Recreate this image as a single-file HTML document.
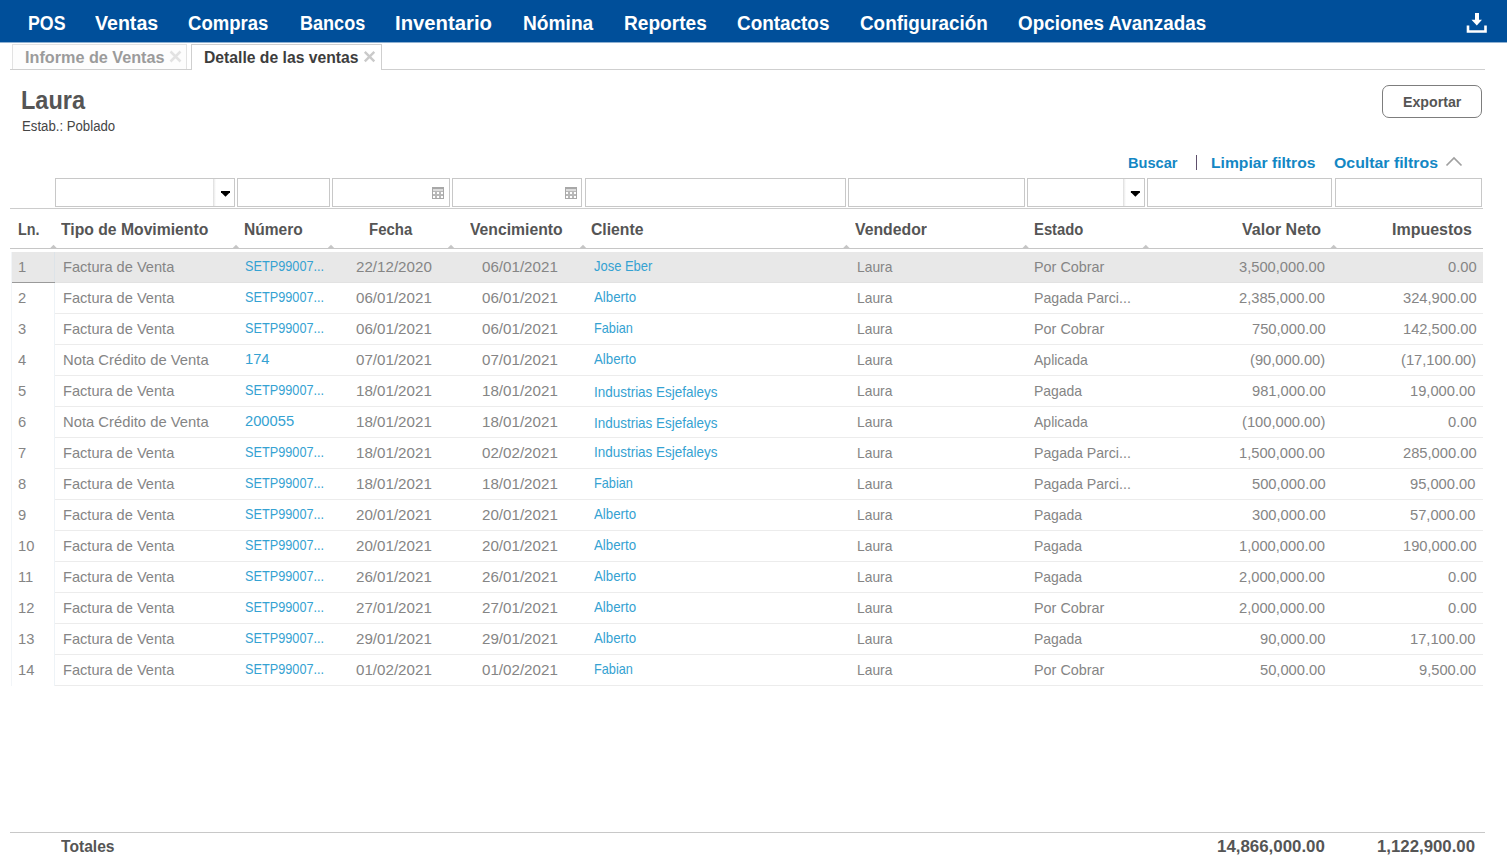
<!DOCTYPE html><html><head><meta charset="utf-8"><style>
html,body{margin:0;padding:0;background:#fff;width:1507px;height:862px;overflow:hidden;position:relative;font-family:"Liberation Sans",sans-serif}
.t{position:absolute;white-space:nowrap;line-height:normal;transform-origin:0 0}
.b{position:absolute;box-sizing:border-box}
</style></head><body>
<div class="b" style="left:0;top:0;width:1507px;height:42px;background:#004f9a"></div>
<div class="b" style="left:0;top:42px;width:1507px;height:1px;background:#8fb1d2"></div>
<svg style="position:absolute;left:1460px;top:8px" width="34" height="30" viewBox="1460 8 34 30"><rect x="1475" y="13" width="4" height="8" fill="#fff"/><path d="M1471.5 19.8 L1482 19.8 L1476.8 25.5 Z" fill="#fff"/><path d="M1468 25.5 V31.5 H1485.5 V25.5" fill="none" stroke="#fff" stroke-width="2.6"/></svg>
<div class="b" style="left:12px;top:44px;width:175px;height:26px;border:1px solid #e2e2e2;border-bottom:none;background:#fdfdfd"></div>
<div class="b" style="left:10px;top:69px;width:1475px;height:1px;background:#cfcfcf"></div>
<div class="b" style="left:191px;top:44px;width:191px;height:26px;border:1px solid #cfcfcf;border-bottom:none;background:#fff"></div>
<svg style="position:absolute;left:165px;top:46px" width="22" height="22" viewBox="165 46 22 22"><path d="M170.5 51.5 L180.5 61.5 M180.5 51.5 L170.5 61.5" stroke="#e2e2e2" stroke-width="2.5"/></svg>
<svg style="position:absolute;left:360px;top:46px" width="22" height="22" viewBox="360 46 22 22"><path d="M364.8 51.8 L374.3 61.3 M374.3 51.8 L364.8 61.3" stroke="#cacaca" stroke-width="2.4"/></svg>
<div class="b" style="left:1382px;top:85px;width:100px;height:33px;border:1.5px solid #7d7d7d;border-radius:7px;background:#fff"></div>
<div class="b" style="left:1196px;top:155px;width:1px;height:15px;background:#5e4f6c"></div>
<svg style="position:absolute;left:1440px;top:150px" width="30" height="22" viewBox="1440 150 30 22"><path d="M1446.5 165.5 L1454 158 L1461.5 165.5" fill="none" stroke="#a0a0a0" stroke-width="1.7"/></svg>
<div class="b" style="left:55px;top:178px;width:180px;height:29px;border:1px solid #c8c8c8;background:#fff"></div>
<div class="b" style="left:237px;top:178px;width:93px;height:29px;border:1px solid #c8c8c8;background:#fff"></div>
<div class="b" style="left:332px;top:178px;width:118px;height:29px;border:1px solid #c8c8c8;background:#fff"></div>
<div class="b" style="left:452px;top:178px;width:130px;height:29px;border:1px solid #c8c8c8;background:#fff"></div>
<div class="b" style="left:585px;top:178px;width:261px;height:29px;border:1px solid #c8c8c8;background:#fff"></div>
<div class="b" style="left:848px;top:178px;width:177px;height:29px;border:1px solid #c8c8c8;background:#fff"></div>
<div class="b" style="left:1027px;top:178px;width:118px;height:29px;border:1px solid #c8c8c8;background:#fff"></div>
<div class="b" style="left:1147px;top:178px;width:185px;height:29px;border:1px solid #c8c8c8;background:#fff"></div>
<div class="b" style="left:1335px;top:178px;width:147px;height:29px;border:1px solid #c8c8c8;background:#fff"></div>
<div class="b" style="left:213px;top:179px;width:3px;height:27px;background:linear-gradient(to right,#dcdcdc,#f4f4f4 60%,#fff)"></div>
<svg style="position:absolute;left:219px;top:188px" width="14" height="12" viewBox="219 188 14 12"><path d="M221.0 191 H230.0 V192.2 L225.5 196.8 L221.0 192.2 Z" fill="#000"/></svg>
<div class="b" style="left:1123px;top:179px;width:3px;height:27px;background:linear-gradient(to right,#dcdcdc,#f4f4f4 60%,#fff)"></div>
<svg style="position:absolute;left:1129px;top:188px" width="14" height="12" viewBox="1129 188 14 12"><path d="M1130.9 191 H1139.9 V192.2 L1135.4 196.8 L1130.9 192.2 Z" fill="#000"/></svg>
<svg style="position:absolute;left:432px;top:187px" width="12" height="12" viewBox="0 0 12 12" shape-rendering="crispEdges"><rect x="0" y="0" width="12" height="12" fill="#a8a8a8"/><rect x="1" y="2" width="10" height="2" fill="#dcdcdc"/><rect x="1" y="4" width="10" height="7" fill="#b8b8b8"/><rect x="1" y="5" width="2" height="2" fill="#fff"/><rect x="5" y="5" width="2" height="2" fill="#fff"/><rect x="9" y="5" width="2" height="2" fill="#fff"/><rect x="1" y="9" width="2" height="2" fill="#fff"/><rect x="5" y="9" width="2" height="2" fill="#fff"/><rect x="9" y="9" width="2" height="2" fill="#fff"/></svg>
<svg style="position:absolute;left:565px;top:187px" width="12" height="12" viewBox="0 0 12 12" shape-rendering="crispEdges"><rect x="0" y="0" width="12" height="12" fill="#a8a8a8"/><rect x="1" y="2" width="10" height="2" fill="#dcdcdc"/><rect x="1" y="4" width="10" height="7" fill="#b8b8b8"/><rect x="1" y="5" width="2" height="2" fill="#fff"/><rect x="5" y="5" width="2" height="2" fill="#fff"/><rect x="9" y="5" width="2" height="2" fill="#fff"/><rect x="1" y="9" width="2" height="2" fill="#fff"/><rect x="5" y="9" width="2" height="2" fill="#fff"/><rect x="9" y="9" width="2" height="2" fill="#fff"/></svg>
<div class="b" style="left:10px;top:208px;width:1473px;height:1px;background:#cccccc"></div>
<div class="b" style="left:10px;top:248px;width:1473px;height:1px;background:#c6c6c6"></div>
<svg style="position:absolute;left:0;top:240px" width="1507" height="10" viewBox="0 240 1507 10"><path d="M49.8 248.5 L53.5 244.8 L57.2 248.5 Z" fill="#c6c6c6"/><path d="M232.3 248.5 L236.0 244.8 L239.7 248.5 Z" fill="#c6c6c6"/><path d="M327.3 248.5 L331.0 244.8 L334.7 248.5 Z" fill="#c6c6c6"/><path d="M447.3 248.5 L451.0 244.8 L454.7 248.5 Z" fill="#c6c6c6"/><path d="M579.3 248.5 L583.0 244.8 L586.7 248.5 Z" fill="#c6c6c6"/><path d="M842.7 248.5 L846.4 244.8 L850.1 248.5 Z" fill="#c6c6c6"/><path d="M1022.0 248.5 L1025.7 244.8 L1029.4 248.5 Z" fill="#c6c6c6"/><path d="M1142.1 248.5 L1145.8 244.8 L1149.5 248.5 Z" fill="#c6c6c6"/><path d="M1330.0 248.5 L1333.7 244.8 L1337.4 248.5 Z" fill="#c6c6c6"/></svg>
<div class="b" style="left:11px;top:252px;width:1472px;height:30px;background:#e8e8e8"></div>
<div class="b" style="left:11px;top:282px;width:44px;height:1px;background:#9a9a9a"></div>
<div class="b" style="left:55px;top:282px;width:1428px;height:1px;background:#e2e2e2"></div>
<div class="b" style="left:55px;top:313px;width:1428px;height:1px;background:#ececec"></div>
<div class="b" style="left:55px;top:344px;width:1428px;height:1px;background:#ececec"></div>
<div class="b" style="left:55px;top:375px;width:1428px;height:1px;background:#ececec"></div>
<div class="b" style="left:55px;top:406px;width:1428px;height:1px;background:#ececec"></div>
<div class="b" style="left:55px;top:437px;width:1428px;height:1px;background:#ececec"></div>
<div class="b" style="left:55px;top:468px;width:1428px;height:1px;background:#ececec"></div>
<div class="b" style="left:55px;top:499px;width:1428px;height:1px;background:#ececec"></div>
<div class="b" style="left:55px;top:530px;width:1428px;height:1px;background:#ececec"></div>
<div class="b" style="left:55px;top:561px;width:1428px;height:1px;background:#ececec"></div>
<div class="b" style="left:55px;top:592px;width:1428px;height:1px;background:#ececec"></div>
<div class="b" style="left:55px;top:623px;width:1428px;height:1px;background:#ececec"></div>
<div class="b" style="left:55px;top:654px;width:1428px;height:1px;background:#ececec"></div>
<div class="b" style="left:55px;top:685px;width:1428px;height:1px;background:#ececec"></div>
<div class="b" style="left:11px;top:252px;width:1px;height:434px;background:#f2f5f8"></div>
<div class="b" style="left:54px;top:283px;width:1px;height:403px;background:#eef3f7"></div>
<div class="b" style="left:54px;top:252px;width:1px;height:30px;background:#dde3e8"></div>
<div class="b" style="left:10px;top:832px;width:1475px;height:1px;background:#c8c8c8"></div>
<div class="t" id="nav0" style="left:28.00px;top:12.00px;font-size:20px;color:#ffffff;font-weight:bold;transform:scaleX(0.8881);">POS</div>
<div class="t" id="nav1" style="left:95.30px;top:12.00px;font-size:20px;color:#ffffff;font-weight:bold;transform:scaleX(0.9797);">Ventas</div>
<div class="t" id="nav2" style="left:188.00px;top:12.00px;font-size:20px;color:#ffffff;font-weight:bold;transform:scaleX(0.9264);">Compras</div>
<div class="t" id="nav3" style="left:300.00px;top:12.00px;font-size:20px;color:#ffffff;font-weight:bold;transform:scaleX(0.9028);">Bancos</div>
<div class="t" id="nav4" style="left:395.40px;top:12.00px;font-size:20px;color:#ffffff;font-weight:bold;transform:scaleX(1.0146);">Inventario</div>
<div class="t" id="nav5" style="left:522.80px;top:12.00px;font-size:20px;color:#ffffff;font-weight:bold;transform:scaleX(0.9581);">Nómina</div>
<div class="t" id="nav6" style="left:624.20px;top:12.00px;font-size:20px;color:#ffffff;font-weight:bold;transform:scaleX(0.9552);">Reportes</div>
<div class="t" id="nav7" style="left:736.70px;top:12.00px;font-size:20px;color:#ffffff;font-weight:bold;transform:scaleX(0.9449);">Contactos</div>
<div class="t" id="nav8" style="left:859.70px;top:12.00px;font-size:20px;color:#ffffff;font-weight:bold;transform:scaleX(0.9426);">Configuración</div>
<div class="t" id="nav9" style="left:1017.70px;top:12.00px;font-size:20px;color:#ffffff;font-weight:bold;transform:scaleX(0.9425);">Opciones Avanzadas</div>
<div class="t" id="tab1" style="left:24.90px;top:49.00px;font-size:16px;color:#9b9b9b;font-weight:bold;transform:scaleX(1.0123);">Informe de Ventas</div>
<div class="t" id="tab2" style="left:204.10px;top:49.00px;font-size:16px;color:#3d3d3d;font-weight:bold;transform:scaleX(0.9816);">Detalle de las ventas</div>
<div class="t" id="laura" style="left:21.10px;top:86.00px;font-size:25px;color:#555555;font-weight:bold;transform:scaleX(0.9406);">Laura</div>
<div class="t" id="estab" style="left:21.80px;top:118.00px;font-size:14px;color:#454545;transform:scaleX(0.9424);">Estab.: Poblado</div>
<div class="t" id="exportar" style="left:1402.80px;top:94.00px;font-size:14px;color:#555555;font-weight:bold;transform:scaleX(1.0138);">Exportar</div>
<div class="t" id="buscar" style="left:1128.00px;top:154.00px;font-size:15px;color:#1387c4;font-weight:bold;transform:scaleX(0.9745);">Buscar</div>
<div class="t" id="limpiar" style="left:1210.60px;top:154.00px;font-size:15px;color:#1387c4;font-weight:bold;transform:scaleX(1.0440);">Limpiar filtros</div>
<div class="t" id="ocultar" style="left:1334.10px;top:154.00px;font-size:15px;color:#1387c4;font-weight:bold;transform:scaleX(1.0571);">Ocultar filtros</div>
<div class="t" id="h0" style="left:17.90px;top:221.00px;font-size:16px;color:#555555;font-weight:bold;transform:scaleX(0.8958);">Ln.</div>
<div class="t" id="h1" style="left:61.30px;top:221.00px;font-size:16px;color:#555555;font-weight:bold;transform:scaleX(0.9820);">Tipo de Movimiento</div>
<div class="t" id="h2" style="left:243.80px;top:221.00px;font-size:16px;color:#555555;font-weight:bold;transform:scaleX(0.9705);">Número</div>
<div class="t" id="h3" style="left:369.40px;top:221.00px;font-size:16px;color:#555555;font-weight:bold;transform:scaleX(0.9348);">Fecha</div>
<div class="t" id="h4" style="left:470.20px;top:221.00px;font-size:16px;color:#555555;font-weight:bold;transform:scaleX(0.9832);">Vencimiento</div>
<div class="t" id="h5" style="left:590.90px;top:221.00px;font-size:16px;color:#555555;font-weight:bold;transform:scaleX(0.9830);">Cliente</div>
<div class="t" id="h6" style="left:854.70px;top:221.00px;font-size:16px;color:#555555;font-weight:bold;transform:scaleX(0.9863);">Vendedor</div>
<div class="t" id="h7" style="left:1033.70px;top:221.00px;font-size:16px;color:#555555;font-weight:bold;transform:scaleX(0.9259);">Estado</div>
<div class="t" id="h8" style="left:1242.00px;top:221.00px;font-size:16px;color:#555555;font-weight:bold;">Valor Neto</div>
<div class="t" id="h9" style="left:1391.70px;top:221.00px;font-size:16px;color:#555555;font-weight:bold;transform:scaleX(0.9987);">Impuestos</div>
<div class="t" id="r0_ln" style="left:18.30px;top:258.00px;font-size:15px;color:#858585;transform:scaleX(0.9800);">1</div>
<div class="t" id="r0_tipo" style="left:62.60px;top:258.00px;font-size:15px;color:#858585;transform:scaleX(0.9739);">Factura de Venta</div>
<div class="t" id="r0_num" style="left:245.40px;top:257.00px;font-size:15px;color:#35a2d2;transform:scaleX(0.8470);">SETP99007...</div>
<div class="t" id="r0_fe" style="left:355.73px;top:258.00px;font-size:15px;color:#858585;transform:scaleX(1.0100);">22/12/2020</div>
<div class="t" id="r0_ve" style="left:481.62px;top:258.00px;font-size:15px;color:#858585;transform:scaleX(1.0100);">06/01/2021</div>
<div class="t" id="r0_cli" style="left:593.50px;top:257.00px;font-size:15px;color:#35a2d2;transform:scaleX(0.8630);">Jose Eber</div>
<div class="t" id="r0_ven" style="left:856.50px;top:258.00px;font-size:15px;color:#858585;transform:scaleX(0.9231);">Laura</div>
<div class="t" id="r0_est" style="left:1034.30px;top:258.00px;font-size:15px;color:#858585;transform:scaleX(0.9590);">Por Cobrar</div>
<div class="t" id="r0_val" style="left:1239.46px;top:258.00px;font-size:15px;color:#858585;transform:scaleX(0.9800);">3,500,000.00</div>
<div class="t" id="r0_imp" style="left:1447.58px;top:258.00px;font-size:15px;color:#858585;transform:scaleX(0.9800);">0.00</div>
<div class="t" id="r1_ln" style="left:18.30px;top:289.00px;font-size:15px;color:#858585;transform:scaleX(0.9800);">2</div>
<div class="t" id="r1_tipo" style="left:62.60px;top:289.00px;font-size:15px;color:#858585;transform:scaleX(0.9739);">Factura de Venta</div>
<div class="t" id="r1_num" style="left:245.40px;top:288.00px;font-size:15px;color:#35a2d2;transform:scaleX(0.8470);">SETP99007...</div>
<div class="t" id="r1_fe" style="left:355.73px;top:289.00px;font-size:15px;color:#858585;transform:scaleX(1.0100);">06/01/2021</div>
<div class="t" id="r1_ve" style="left:481.62px;top:289.00px;font-size:15px;color:#858585;transform:scaleX(1.0100);">06/01/2021</div>
<div class="t" id="r1_cli" style="left:593.50px;top:288.00px;font-size:15px;color:#35a2d2;transform:scaleX(0.8850);">Alberto</div>
<div class="t" id="r1_ven" style="left:856.50px;top:289.00px;font-size:15px;color:#858585;transform:scaleX(0.9231);">Laura</div>
<div class="t" id="r1_est" style="left:1034.30px;top:289.00px;font-size:15px;color:#858585;transform:scaleX(0.9440);">Pagada Parci...</div>
<div class="t" id="r1_val" style="left:1239.46px;top:289.00px;font-size:15px;color:#858585;transform:scaleX(0.9800);">2,385,000.00</div>
<div class="t" id="r1_imp" style="left:1402.50px;top:289.00px;font-size:15px;color:#858585;transform:scaleX(0.9800);">324,900.00</div>
<div class="t" id="r2_ln" style="left:18.30px;top:320.00px;font-size:15px;color:#858585;transform:scaleX(0.9800);">3</div>
<div class="t" id="r2_tipo" style="left:62.60px;top:320.00px;font-size:15px;color:#858585;transform:scaleX(0.9739);">Factura de Venta</div>
<div class="t" id="r2_num" style="left:245.40px;top:319.00px;font-size:15px;color:#35a2d2;transform:scaleX(0.8470);">SETP99007...</div>
<div class="t" id="r2_fe" style="left:355.73px;top:320.00px;font-size:15px;color:#858585;transform:scaleX(1.0100);">06/01/2021</div>
<div class="t" id="r2_ve" style="left:481.62px;top:320.00px;font-size:15px;color:#858585;transform:scaleX(1.0100);">06/01/2021</div>
<div class="t" id="r2_cli" style="left:593.50px;top:319.00px;font-size:15px;color:#35a2d2;transform:scaleX(0.8480);">Fabian</div>
<div class="t" id="r2_ven" style="left:856.50px;top:320.00px;font-size:15px;color:#858585;transform:scaleX(0.9231);">Laura</div>
<div class="t" id="r2_est" style="left:1034.30px;top:320.00px;font-size:15px;color:#858585;transform:scaleX(0.9590);">Por Cobrar</div>
<div class="t" id="r2_val" style="left:1252.20px;top:320.00px;font-size:15px;color:#858585;transform:scaleX(0.9800);">750,000.00</div>
<div class="t" id="r2_imp" style="left:1402.50px;top:320.00px;font-size:15px;color:#858585;transform:scaleX(0.9800);">142,500.00</div>
<div class="t" id="r3_ln" style="left:18.30px;top:351.00px;font-size:15px;color:#858585;transform:scaleX(0.9800);">4</div>
<div class="t" id="r3_tipo" style="left:62.60px;top:351.00px;font-size:15px;color:#858585;transform:scaleX(0.9865);">Nota Crédito de Venta</div>
<div class="t" id="r3_num" style="left:245.40px;top:350.00px;font-size:15px;color:#35a2d2;transform:scaleX(0.9800);">174</div>
<div class="t" id="r3_fe" style="left:355.73px;top:351.00px;font-size:15px;color:#858585;transform:scaleX(1.0100);">07/01/2021</div>
<div class="t" id="r3_ve" style="left:481.62px;top:351.00px;font-size:15px;color:#858585;transform:scaleX(1.0100);">07/01/2021</div>
<div class="t" id="r3_cli" style="left:593.50px;top:350.00px;font-size:15px;color:#35a2d2;transform:scaleX(0.8850);">Alberto</div>
<div class="t" id="r3_ven" style="left:856.50px;top:351.00px;font-size:15px;color:#858585;transform:scaleX(0.9231);">Laura</div>
<div class="t" id="r3_est" style="left:1034.30px;top:351.00px;font-size:15px;color:#858585;transform:scaleX(0.9340);">Aplicada</div>
<div class="t" id="r3_val" style="left:1250.24px;top:351.00px;font-size:15px;color:#858585;transform:scaleX(0.9800);">(90,000.00)</div>
<div class="t" id="r3_imp" style="left:1400.54px;top:351.00px;font-size:15px;color:#858585;transform:scaleX(0.9800);">(17,100.00)</div>
<div class="t" id="r4_ln" style="left:18.30px;top:382.00px;font-size:15px;color:#858585;transform:scaleX(0.9800);">5</div>
<div class="t" id="r4_tipo" style="left:62.60px;top:382.00px;font-size:15px;color:#858585;transform:scaleX(0.9739);">Factura de Venta</div>
<div class="t" id="r4_num" style="left:245.40px;top:381.00px;font-size:15px;color:#35a2d2;transform:scaleX(0.8470);">SETP99007...</div>
<div class="t" id="r4_fe" style="left:355.73px;top:382.00px;font-size:15px;color:#858585;transform:scaleX(1.0100);">18/01/2021</div>
<div class="t" id="r4_ve" style="left:481.62px;top:382.00px;font-size:15px;color:#858585;transform:scaleX(1.0100);">18/01/2021</div>
<div class="t" id="r4_cli" style="left:593.50px;top:383.00px;font-size:15px;color:#35a2d2;transform:scaleX(0.8970);">Industrias Esjefaleys</div>
<div class="t" id="r4_ven" style="left:856.50px;top:382.00px;font-size:15px;color:#858585;transform:scaleX(0.9231);">Laura</div>
<div class="t" id="r4_est" style="left:1034.30px;top:382.00px;font-size:15px;color:#858585;transform:scaleX(0.9300);">Pagada</div>
<div class="t" id="r4_val" style="left:1252.20px;top:382.00px;font-size:15px;color:#858585;transform:scaleX(0.9800);">981,000.00</div>
<div class="t" id="r4_imp" style="left:1410.34px;top:382.00px;font-size:15px;color:#858585;transform:scaleX(0.9800);">19,000.00</div>
<div class="t" id="r5_ln" style="left:18.30px;top:413.00px;font-size:15px;color:#858585;transform:scaleX(0.9800);">6</div>
<div class="t" id="r5_tipo" style="left:62.60px;top:413.00px;font-size:15px;color:#858585;transform:scaleX(0.9865);">Nota Crédito de Venta</div>
<div class="t" id="r5_num" style="left:245.40px;top:412.00px;font-size:15px;color:#35a2d2;transform:scaleX(0.9800);">200055</div>
<div class="t" id="r5_fe" style="left:355.73px;top:413.00px;font-size:15px;color:#858585;transform:scaleX(1.0100);">18/01/2021</div>
<div class="t" id="r5_ve" style="left:481.62px;top:413.00px;font-size:15px;color:#858585;transform:scaleX(1.0100);">18/01/2021</div>
<div class="t" id="r5_cli" style="left:593.50px;top:414.00px;font-size:15px;color:#35a2d2;transform:scaleX(0.8970);">Industrias Esjefaleys</div>
<div class="t" id="r5_ven" style="left:856.50px;top:413.00px;font-size:15px;color:#858585;transform:scaleX(0.9231);">Laura</div>
<div class="t" id="r5_est" style="left:1034.30px;top:413.00px;font-size:15px;color:#858585;transform:scaleX(0.9340);">Aplicada</div>
<div class="t" id="r5_val" style="left:1242.40px;top:413.00px;font-size:15px;color:#858585;transform:scaleX(0.9800);">(100,000.00)</div>
<div class="t" id="r5_imp" style="left:1447.58px;top:413.00px;font-size:15px;color:#858585;transform:scaleX(0.9800);">0.00</div>
<div class="t" id="r6_ln" style="left:18.30px;top:444.00px;font-size:15px;color:#858585;transform:scaleX(0.9800);">7</div>
<div class="t" id="r6_tipo" style="left:62.60px;top:444.00px;font-size:15px;color:#858585;transform:scaleX(0.9739);">Factura de Venta</div>
<div class="t" id="r6_num" style="left:245.40px;top:443.00px;font-size:15px;color:#35a2d2;transform:scaleX(0.8470);">SETP99007...</div>
<div class="t" id="r6_fe" style="left:355.73px;top:444.00px;font-size:15px;color:#858585;transform:scaleX(1.0100);">18/01/2021</div>
<div class="t" id="r6_ve" style="left:481.62px;top:444.00px;font-size:15px;color:#858585;transform:scaleX(1.0100);">02/02/2021</div>
<div class="t" id="r6_cli" style="left:593.50px;top:443.00px;font-size:15px;color:#35a2d2;transform:scaleX(0.8970);">Industrias Esjefaleys</div>
<div class="t" id="r6_ven" style="left:856.50px;top:444.00px;font-size:15px;color:#858585;transform:scaleX(0.9231);">Laura</div>
<div class="t" id="r6_est" style="left:1034.30px;top:444.00px;font-size:15px;color:#858585;transform:scaleX(0.9440);">Pagada Parci...</div>
<div class="t" id="r6_val" style="left:1239.46px;top:444.00px;font-size:15px;color:#858585;transform:scaleX(0.9800);">1,500,000.00</div>
<div class="t" id="r6_imp" style="left:1402.50px;top:444.00px;font-size:15px;color:#858585;transform:scaleX(0.9800);">285,000.00</div>
<div class="t" id="r7_ln" style="left:18.30px;top:475.00px;font-size:15px;color:#858585;transform:scaleX(0.9800);">8</div>
<div class="t" id="r7_tipo" style="left:62.60px;top:475.00px;font-size:15px;color:#858585;transform:scaleX(0.9739);">Factura de Venta</div>
<div class="t" id="r7_num" style="left:245.40px;top:474.00px;font-size:15px;color:#35a2d2;transform:scaleX(0.8470);">SETP99007...</div>
<div class="t" id="r7_fe" style="left:355.73px;top:475.00px;font-size:15px;color:#858585;transform:scaleX(1.0100);">18/01/2021</div>
<div class="t" id="r7_ve" style="left:481.62px;top:475.00px;font-size:15px;color:#858585;transform:scaleX(1.0100);">18/01/2021</div>
<div class="t" id="r7_cli" style="left:593.50px;top:474.00px;font-size:15px;color:#35a2d2;transform:scaleX(0.8480);">Fabian</div>
<div class="t" id="r7_ven" style="left:856.50px;top:475.00px;font-size:15px;color:#858585;transform:scaleX(0.9231);">Laura</div>
<div class="t" id="r7_est" style="left:1034.30px;top:475.00px;font-size:15px;color:#858585;transform:scaleX(0.9440);">Pagada Parci...</div>
<div class="t" id="r7_val" style="left:1252.20px;top:475.00px;font-size:15px;color:#858585;transform:scaleX(0.9800);">500,000.00</div>
<div class="t" id="r7_imp" style="left:1410.34px;top:475.00px;font-size:15px;color:#858585;transform:scaleX(0.9800);">95,000.00</div>
<div class="t" id="r8_ln" style="left:18.30px;top:506.00px;font-size:15px;color:#858585;transform:scaleX(0.9800);">9</div>
<div class="t" id="r8_tipo" style="left:62.60px;top:506.00px;font-size:15px;color:#858585;transform:scaleX(0.9739);">Factura de Venta</div>
<div class="t" id="r8_num" style="left:245.40px;top:505.00px;font-size:15px;color:#35a2d2;transform:scaleX(0.8470);">SETP99007...</div>
<div class="t" id="r8_fe" style="left:355.73px;top:506.00px;font-size:15px;color:#858585;transform:scaleX(1.0100);">20/01/2021</div>
<div class="t" id="r8_ve" style="left:481.62px;top:506.00px;font-size:15px;color:#858585;transform:scaleX(1.0100);">20/01/2021</div>
<div class="t" id="r8_cli" style="left:593.50px;top:505.00px;font-size:15px;color:#35a2d2;transform:scaleX(0.8850);">Alberto</div>
<div class="t" id="r8_ven" style="left:856.50px;top:506.00px;font-size:15px;color:#858585;transform:scaleX(0.9231);">Laura</div>
<div class="t" id="r8_est" style="left:1034.30px;top:506.00px;font-size:15px;color:#858585;transform:scaleX(0.9300);">Pagada</div>
<div class="t" id="r8_val" style="left:1252.20px;top:506.00px;font-size:15px;color:#858585;transform:scaleX(0.9800);">300,000.00</div>
<div class="t" id="r8_imp" style="left:1410.34px;top:506.00px;font-size:15px;color:#858585;transform:scaleX(0.9800);">57,000.00</div>
<div class="t" id="r9_ln" style="left:18.30px;top:537.00px;font-size:15px;color:#858585;transform:scaleX(0.9800);">10</div>
<div class="t" id="r9_tipo" style="left:62.60px;top:537.00px;font-size:15px;color:#858585;transform:scaleX(0.9739);">Factura de Venta</div>
<div class="t" id="r9_num" style="left:245.40px;top:536.00px;font-size:15px;color:#35a2d2;transform:scaleX(0.8470);">SETP99007...</div>
<div class="t" id="r9_fe" style="left:355.73px;top:537.00px;font-size:15px;color:#858585;transform:scaleX(1.0100);">20/01/2021</div>
<div class="t" id="r9_ve" style="left:481.62px;top:537.00px;font-size:15px;color:#858585;transform:scaleX(1.0100);">20/01/2021</div>
<div class="t" id="r9_cli" style="left:593.50px;top:536.00px;font-size:15px;color:#35a2d2;transform:scaleX(0.8850);">Alberto</div>
<div class="t" id="r9_ven" style="left:856.50px;top:537.00px;font-size:15px;color:#858585;transform:scaleX(0.9231);">Laura</div>
<div class="t" id="r9_est" style="left:1034.30px;top:537.00px;font-size:15px;color:#858585;transform:scaleX(0.9300);">Pagada</div>
<div class="t" id="r9_val" style="left:1239.46px;top:537.00px;font-size:15px;color:#858585;transform:scaleX(0.9800);">1,000,000.00</div>
<div class="t" id="r9_imp" style="left:1402.50px;top:537.00px;font-size:15px;color:#858585;transform:scaleX(0.9800);">190,000.00</div>
<div class="t" id="r10_ln" style="left:18.30px;top:568.00px;font-size:15px;color:#858585;transform:scaleX(0.9800);">11</div>
<div class="t" id="r10_tipo" style="left:62.60px;top:568.00px;font-size:15px;color:#858585;transform:scaleX(0.9739);">Factura de Venta</div>
<div class="t" id="r10_num" style="left:245.40px;top:567.00px;font-size:15px;color:#35a2d2;transform:scaleX(0.8470);">SETP99007...</div>
<div class="t" id="r10_fe" style="left:355.73px;top:568.00px;font-size:15px;color:#858585;transform:scaleX(1.0100);">26/01/2021</div>
<div class="t" id="r10_ve" style="left:481.62px;top:568.00px;font-size:15px;color:#858585;transform:scaleX(1.0100);">26/01/2021</div>
<div class="t" id="r10_cli" style="left:593.50px;top:567.00px;font-size:15px;color:#35a2d2;transform:scaleX(0.8850);">Alberto</div>
<div class="t" id="r10_ven" style="left:856.50px;top:568.00px;font-size:15px;color:#858585;transform:scaleX(0.9231);">Laura</div>
<div class="t" id="r10_est" style="left:1034.30px;top:568.00px;font-size:15px;color:#858585;transform:scaleX(0.9300);">Pagada</div>
<div class="t" id="r10_val" style="left:1239.46px;top:568.00px;font-size:15px;color:#858585;transform:scaleX(0.9800);">2,000,000.00</div>
<div class="t" id="r10_imp" style="left:1447.58px;top:568.00px;font-size:15px;color:#858585;transform:scaleX(0.9800);">0.00</div>
<div class="t" id="r11_ln" style="left:18.30px;top:599.00px;font-size:15px;color:#858585;transform:scaleX(0.9800);">12</div>
<div class="t" id="r11_tipo" style="left:62.60px;top:599.00px;font-size:15px;color:#858585;transform:scaleX(0.9739);">Factura de Venta</div>
<div class="t" id="r11_num" style="left:245.40px;top:598.00px;font-size:15px;color:#35a2d2;transform:scaleX(0.8470);">SETP99007...</div>
<div class="t" id="r11_fe" style="left:355.73px;top:599.00px;font-size:15px;color:#858585;transform:scaleX(1.0100);">27/01/2021</div>
<div class="t" id="r11_ve" style="left:481.62px;top:599.00px;font-size:15px;color:#858585;transform:scaleX(1.0100);">27/01/2021</div>
<div class="t" id="r11_cli" style="left:593.50px;top:598.00px;font-size:15px;color:#35a2d2;transform:scaleX(0.8850);">Alberto</div>
<div class="t" id="r11_ven" style="left:856.50px;top:599.00px;font-size:15px;color:#858585;transform:scaleX(0.9231);">Laura</div>
<div class="t" id="r11_est" style="left:1034.30px;top:599.00px;font-size:15px;color:#858585;transform:scaleX(0.9590);">Por Cobrar</div>
<div class="t" id="r11_val" style="left:1239.46px;top:599.00px;font-size:15px;color:#858585;transform:scaleX(0.9800);">2,000,000.00</div>
<div class="t" id="r11_imp" style="left:1447.58px;top:599.00px;font-size:15px;color:#858585;transform:scaleX(0.9800);">0.00</div>
<div class="t" id="r12_ln" style="left:18.30px;top:630.00px;font-size:15px;color:#858585;transform:scaleX(0.9800);">13</div>
<div class="t" id="r12_tipo" style="left:62.60px;top:630.00px;font-size:15px;color:#858585;transform:scaleX(0.9739);">Factura de Venta</div>
<div class="t" id="r12_num" style="left:245.40px;top:629.00px;font-size:15px;color:#35a2d2;transform:scaleX(0.8470);">SETP99007...</div>
<div class="t" id="r12_fe" style="left:355.73px;top:630.00px;font-size:15px;color:#858585;transform:scaleX(1.0100);">29/01/2021</div>
<div class="t" id="r12_ve" style="left:481.62px;top:630.00px;font-size:15px;color:#858585;transform:scaleX(1.0100);">29/01/2021</div>
<div class="t" id="r12_cli" style="left:593.50px;top:629.00px;font-size:15px;color:#35a2d2;transform:scaleX(0.8850);">Alberto</div>
<div class="t" id="r12_ven" style="left:856.50px;top:630.00px;font-size:15px;color:#858585;transform:scaleX(0.9231);">Laura</div>
<div class="t" id="r12_est" style="left:1034.30px;top:630.00px;font-size:15px;color:#858585;transform:scaleX(0.9300);">Pagada</div>
<div class="t" id="r12_val" style="left:1260.04px;top:630.00px;font-size:15px;color:#858585;transform:scaleX(0.9800);">90,000.00</div>
<div class="t" id="r12_imp" style="left:1410.34px;top:630.00px;font-size:15px;color:#858585;transform:scaleX(0.9800);">17,100.00</div>
<div class="t" id="r13_ln" style="left:18.30px;top:661.00px;font-size:15px;color:#858585;transform:scaleX(0.9800);">14</div>
<div class="t" id="r13_tipo" style="left:62.60px;top:661.00px;font-size:15px;color:#858585;transform:scaleX(0.9739);">Factura de Venta</div>
<div class="t" id="r13_num" style="left:245.40px;top:660.00px;font-size:15px;color:#35a2d2;transform:scaleX(0.8470);">SETP99007...</div>
<div class="t" id="r13_fe" style="left:355.73px;top:661.00px;font-size:15px;color:#858585;transform:scaleX(1.0100);">01/02/2021</div>
<div class="t" id="r13_ve" style="left:481.62px;top:661.00px;font-size:15px;color:#858585;transform:scaleX(1.0100);">01/02/2021</div>
<div class="t" id="r13_cli" style="left:593.50px;top:660.00px;font-size:15px;color:#35a2d2;transform:scaleX(0.8480);">Fabian</div>
<div class="t" id="r13_ven" style="left:856.50px;top:661.00px;font-size:15px;color:#858585;transform:scaleX(0.9231);">Laura</div>
<div class="t" id="r13_est" style="left:1034.30px;top:661.00px;font-size:15px;color:#858585;transform:scaleX(0.9590);">Por Cobrar</div>
<div class="t" id="r13_val" style="left:1260.04px;top:661.00px;font-size:15px;color:#858585;transform:scaleX(0.9800);">50,000.00</div>
<div class="t" id="r13_imp" style="left:1419.16px;top:661.00px;font-size:15px;color:#858585;transform:scaleX(0.9800);">9,500.00</div>
<div class="t" id="totales" style="left:61.40px;top:837.60px;font-size:16px;color:#555555;font-weight:bold;transform:scaleX(0.9764);">Totales</div>
<div class="t" id="tot1" style="left:1217.00px;top:837.60px;font-size:16px;color:#555555;font-weight:bold;transform:scaleX(1.0544);">14,866,000.00</div>
<div class="t" id="tot2" style="left:1376.70px;top:837.60px;font-size:16px;color:#555555;font-weight:bold;transform:scaleX(1.0489);">1,122,900.00</div>
</body></html>
